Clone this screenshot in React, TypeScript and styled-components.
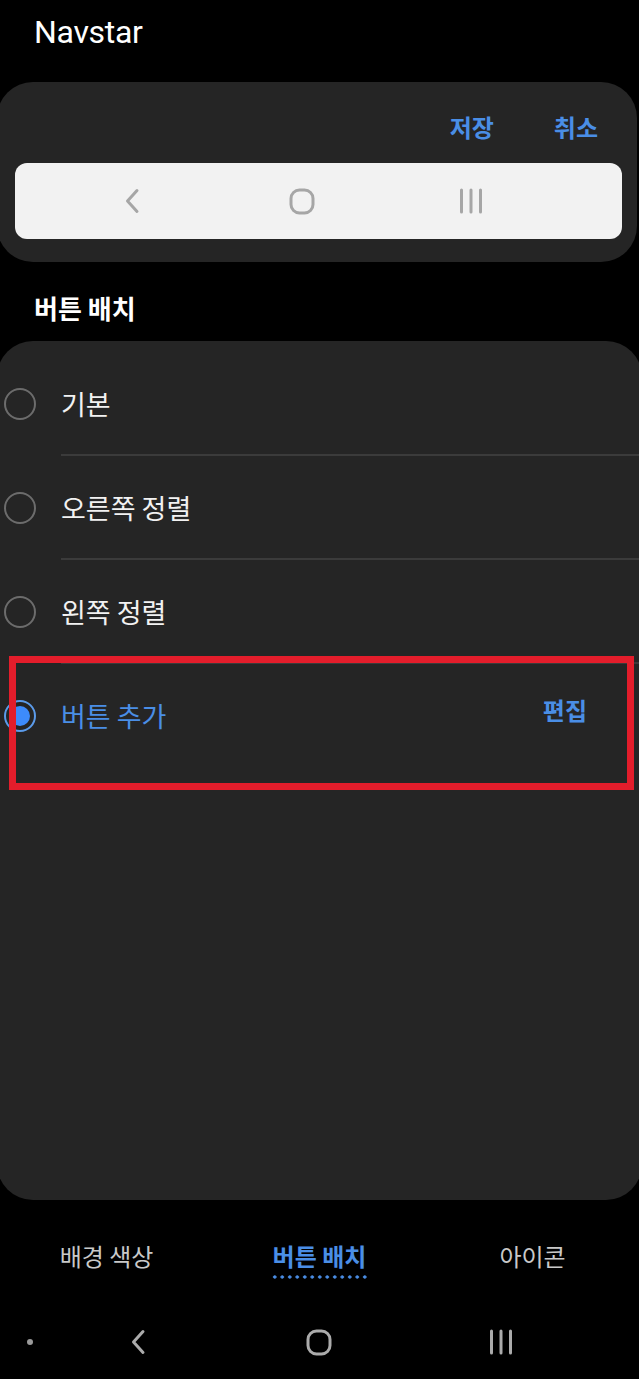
import React from "react";
import styled, { createGlobalStyle } from "styled-components";

const Global = createGlobalStyle`
  html, body { margin: 0; padding: 0; background: #000; }
  body { overflow: hidden; }
  * { box-sizing: border-box; }
`;

const KR = `"Noto Sans CJK KR", "Noto Sans", sans-serif`;
const BLUE = "#4a8ee6";

const Screen = styled.div`
  width: 639px;
  height: 1379px;
  background: #000;
  overflow: hidden;
  display: flex;
  flex-direction: column;
  font-family: ${KR};
`;

const Header = styled.header`
  height: 82px;
  padding: 12px 0 0 34px;
  font: 400 32px/40px Roboto, "Liberation Sans", sans-serif;
  color: #fff;
  letter-spacing: -0.3px;
`;

const Card = styled.section<{ $h: number; $right: number }>`
  height: ${(p) => p.$h}px;
  margin-left: -3px;
  width: ${(p) => p.$right + 3}px;
  border-radius: 36px;
  background: #252525;
  display: flex;
  flex-direction: column;
  flex-shrink: 0;
`;

const ActionRow = styled.div`
  height: 81px;
  padding: 8px 39px 0 0;
  display: flex;
  justify-content: flex-end;
  align-items: center;
  gap: 60px;
`;

const Action = styled.span`
  font: 700 24px/30px ${KR};
  color: ${BLUE};
`;

const LightBar = styled.div`
  height: 76px;
  margin: 0 15px 0 18px;
  border-radius: 12px;
  background: #f2f2f2;
  display: flex;
  align-items: center;
  padding-left: 109px;
  color: #a6a6a6;
`;

const IconSlot = styled.span<{ $ml?: number }>`
  display: flex;
  margin-left: ${(p) => p.$ml ?? 0}px;
`;

const SectionLabel = styled.div`
  height: 79px;
  padding: 30px 0 0 34px;
  font: 700 26px/32px ${KR};
  color: #fff;
`;

const Row = styled.div`
  position: relative;
  display: flex;
  align-items: stretch;
  padding-left: 7px;
`;

const RadioCol = styled.div`
  width: 57px;
  display: flex;
  align-items: center;
`;

const Radio = styled.span<{ $on?: boolean }>`
  width: 32px;
  height: 32px;
  border-radius: 50%;
  border: 2px solid ${(p) => (p.$on ? "#5b9bea" : "#6c6c6c")};
  display: flex;
  align-items: center;
  justify-content: center;
  &::after {
    content: "";
    display: ${(p) => (p.$on ? "block" : "none")};
    width: 20px;
    height: 20px;
    border-radius: 50%;
    background: #3d8bfb;
  }
`;

const RowBody = styled.div<{ $last?: boolean }>`
  flex: 1;
  height: 104px;
  border-bottom: 2px solid ${(p) => (p.$last ? "transparent" : "#3b3b3b")};
  display: flex;
  align-items: center;
  justify-content: space-between;
  padding: 2px 55px 0 0;
`;

const RowText = styled.span<{ $on?: boolean }>`
  font: 400 27px/34px ${KR};
  color: ${(p) => (p.$on ? BLUE : "#f2f2f2")};
`;

const EditLink = styled.span`
  font: 700 24px/30px ${KR};
  color: ${BLUE};
  margin-bottom: 12px;
`;

const Highlight = styled.div`
  position: absolute;
  left: 12px;
  top: -8px;
  width: 625px;
  height: 134px;
  border: 7px solid #e31d2b;
  pointer-events: none;
`;

const Tabs = styled.nav`
  height: 105px;
  display: grid;
  grid-template-columns: repeat(3, 1fr);
  padding-top: 40px;
  flex-shrink: 0;
`;

const Tab = styled.div`
  display: flex;
  flex-direction: column;
  align-items: center;
`;

const TabLabel = styled.span<{ $on?: boolean }>`
  font: ${(p) => (p.$on ? 700 : 400)} 24px/32px ${KR};
  color: ${(p) => (p.$on ? BLUE : "#c9c9c9")};
`;

const DotLine = styled.span`
  margin-top: 3px;
  width: 98px;
  height: 4px;
  background-image: radial-gradient(circle, ${BLUE} 1.4px, transparent 1.9px);
  background-size: 7.5px 4px;
  background-position: 0 0;
`;

const NavBar = styled.div`
  flex: 1;
  display: flex;
  align-items: center;
  padding: 0 0 0 27px;
  color: #ababab;
`;

const SmallDot = styled.span`
  width: 6px;
  height: 6px;
  border-radius: 50%;
  background: #9a9a9a;
`;

const Back = ({ h = 26 }: { h?: number }) => (
  <svg width="16" height={h} viewBox="0 0 16 26" fill="none">
    <path d="M13 2.5 L3.5 13 L13 23.5" stroke="currentColor" strokeWidth="3" strokeLinecap="round" strokeLinejoin="round" />
  </svg>
);

const Home = () => (
  <svg width="26" height="27" viewBox="0 0 26 27" fill="none">
    <rect x="2" y="2" width="22" height="23" rx="8.5" stroke="currentColor" strokeWidth="3" />
  </svg>
);

const Recents = () => (
  <svg width="24" height="26" viewBox="0 0 24 26" fill="none">
    <path d="M2.5 2 V24 M12 2 V24 M21.5 2 V24" stroke="currentColor" strokeWidth="3" strokeLinecap="round" />
  </svg>
);

const options = [
  { label: "기본" },
  { label: "오른쪽 정렬" },
  { label: "왼쪽 정렬" },
  { label: "버튼 추가", on: true, edit: true },
];

export default function App() {
  return (
    <>
      <Global />
      <Screen>
        <Header>Navstar</Header>
        <Card $h={180} $right={637}>
          <ActionRow>
            <Action>저장</Action>
            <Action>취소</Action>
          </ActionRow>
          <LightBar>
            <IconSlot><Back /></IconSlot>
            <IconSlot $ml={149}><Home /></IconSlot>
            <IconSlot $ml={144}><Recents /></IconSlot>
          </LightBar>
        </Card>
        <SectionLabel>버튼 배치</SectionLabel>
        <Card $h={859} $right={642} style={{ paddingTop: 11 }}>
          {options.map((o, i) => (
            <Row key={o.label}>
              <RadioCol>
                <Radio $on={o.on} />
              </RadioCol>
              <RowBody $last={i === options.length - 1}>
                <RowText $on={o.on}>{o.label}</RowText>
                {o.edit && <EditLink>편집</EditLink>}
              </RowBody>
              {o.on && <Highlight />}
            </Row>
          ))}
        </Card>
        <Tabs>
          <Tab><TabLabel>배경 색상</TabLabel></Tab>
          <Tab>
            <TabLabel $on>버튼 배치</TabLabel>
            <DotLine />
          </Tab>
          <Tab><TabLabel>아이콘</TabLabel></Tab>
        </Tabs>
        <NavBar>
          <SmallDot />
          <IconSlot $ml={97}><Back /></IconSlot>
          <IconSlot $ml={160}><Home /></IconSlot>
          <IconSlot $ml={157}><Recents /></IconSlot>
        </NavBar>
      </Screen>
    </>
  );
}
